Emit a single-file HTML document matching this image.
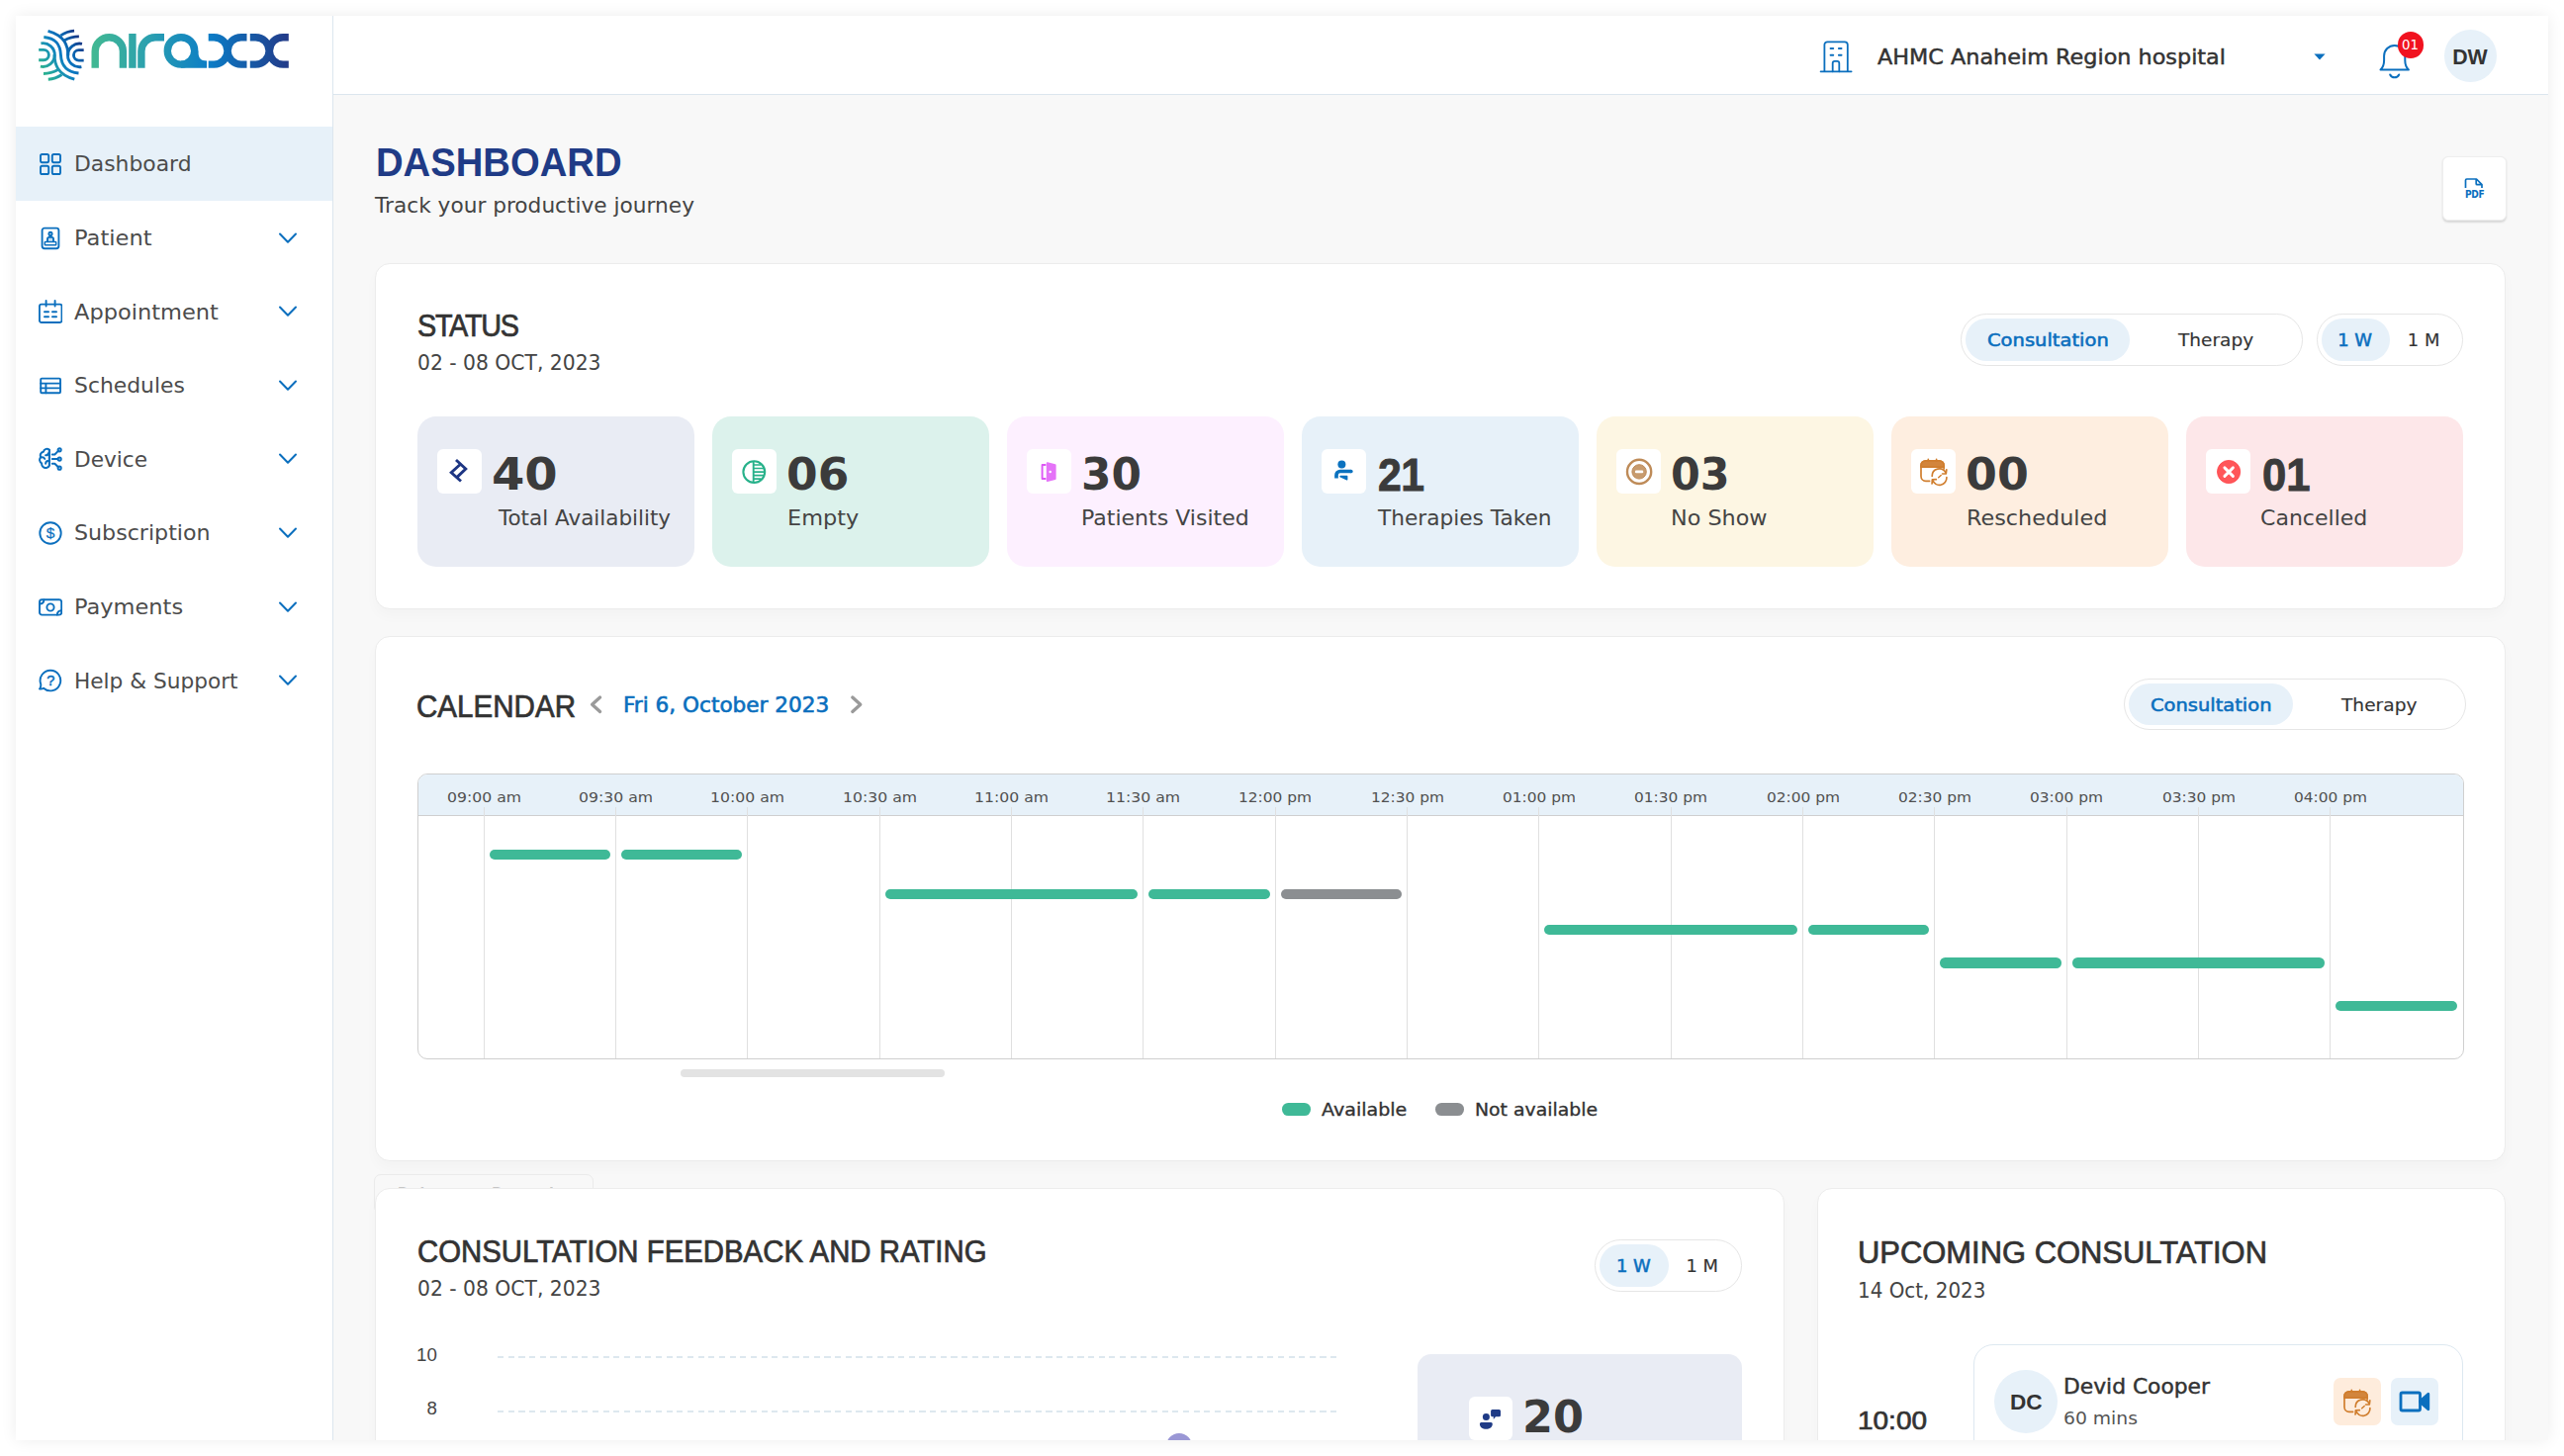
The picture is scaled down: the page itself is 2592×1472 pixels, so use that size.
<!DOCTYPE html>
<html lang="en">
<head>
<meta charset="utf-8">
<title>Niraxx Dashboard</title>
<style>
*{box-sizing:border-box;margin:0;padding:0}
html,body{width:2592px;height:1472px;background:#fff;overflow:hidden}
body{font-family:"DejaVu Sans","Liberation Sans",sans-serif;color:#444;position:relative}
.abs{position:absolute}
#frame{position:absolute;left:16px;top:16px;width:2560px;height:1440px;background:#f8f8f8;overflow:hidden}
#shadow{position:absolute;left:16px;top:16px;width:2560px;height:1440px;box-shadow:0 0 15px rgba(0,0,0,.075)}
#page{position:absolute;left:-16px;top:-16px;width:2592px;height:1472px}
.t{position:absolute;white-space:pre;line-height:1;transform-origin:0 0}
.card{position:absolute;background:#fff;border:1px solid #ececec;border-radius:15px;box-shadow:0 7px 13px rgba(0,0,0,.024)}
</style>
</head>
<body>
<div id="shadow"></div>
<div id="frame"><div id="page">

<div class="abs" style="left:16.0px;top:16.0px;width:321.0px;height:1440.0px;background:#fff;border-right:1px solid #dce6ee;"></div>
<svg class="abs" style="left:0.0px;top:0.0px;" width="330" height="100" viewBox="0 0 330 100" fill="none" role="img" aria-label="niraxx"><title>niraxx</title>
<defs>
<linearGradient id="lg" x1="92" y1="0" x2="292" y2="0" gradientUnits="userSpaceOnUse"><stop offset="0" stop-color="#42b992"/><stop offset=".3" stop-color="#2a9fb0"/><stop offset=".6" stop-color="#0b7cc6"/><stop offset="1" stop-color="#233a88"/></linearGradient>

</defs>
<g stroke="url(#lg)" stroke-width="7.4" fill="none">
<path d="M96.2 68.8V51.8a14.1 14.1 0 0 1 28.2 0V68.8"/>
<path d="M133.9 34V68.8"/>
<path d="M142.9 68.8V51.8a14.1 14.1 0 0 1 14.1-14.1h9"/>
<circle cx="183" cy="51.400" r="13.700"/><path d="M196.700 51.400c0 9 3.500 13.700 12.400 13.700H183"/>
<path d="M210.7 37.7h5.6a13.7 13.7 0 0 1 0 27.4h-5.6M249.5 37.7h-5.7a13.7 13.7 0 0 0 0 27.4h5.7"/>
<path d="M252.8 37.7h5.6a13.7 13.7 0 0 1 0 27.4h-5.6M291.8 37.7h-5.7a13.7 13.7 0 0 0 0 27.4h5.7"/>
</g></svg>
<svg class="abs" style="left:32.0px;top:24.0px;" width="64" height="66" viewBox="0 0 1412 1456" fill="none"><defs><linearGradient id="lf2" x1="150" y1="1000" x2="1170" y2="380" gradientUnits="userSpaceOnUse"><stop offset="0" stop-color="#2db68a"/><stop offset=".3" stop-color="#1c98ae"/><stop offset=".5" stop-color="#0b7ac3"/><stop offset=".75" stop-color="#0a5fab"/><stop offset="1" stop-color="#1a2a7a"/></linearGradient></defs>
<g stroke="url(#lf2)" stroke-width="64" fill="none">
<path d="M158 582H268A114 114 0 0 1 268 812H158"/>
<path d="M1162 818H1052A114 114 0 0 1 1052 588H1162"/>
<path d="M208 438A262 262 0 1 1 196 952"/>
<path d="M1112 962A262 262 0 1 1 1124 448"/>
<path d="M506 690C512 900 570 1130 955 1238"/>
<path d="M814 710C808 500 750 270 365 162"/>
<path d="M272 298C560 325 640 480 650 700S760 1075 1048 1102"/>
<path d="M648 262Q790 168 950 158"/>
<path d="M732 372Q885 285 1056 285"/>
<path d="M672 1138Q530 1232 370 1242"/>
<path d="M588 1028Q435 1115 264 1115"/>
</g></svg>
<div class="abs" style="left:16.0px;top:128.0px;width:320.0px;height:74.6px;background:#e7f1f9;"></div>
<svg class="abs" style="left:38.8px;top:153.9px;" width="24" height="24" viewBox="0 0 24 24" fill="none"><g stroke="#0b6fbe" stroke-width="1.9" fill="none" stroke-linecap="round" stroke-linejoin="round"><rect x="2" y="2" width="8.2" height="8.2" rx="1.6"/><rect x="13.8" y="2" width="8.2" height="8.2" rx="1.6"/><rect x="2" y="13.8" width="8.2" height="8.2" rx="1.6"/><rect x="13.8" y="13.8" width="8.2" height="8.2" rx="1.6"/></g></svg>
<div class="t" style="left:75.0px;top:156.2px;font-size:20.48px;color:#4c4c4c;transform:scaleX(1.0679);">Dashboard</div>
<svg class="abs" style="left:38.8px;top:228.6px;" width="24" height="24" viewBox="0 0 24 24" fill="none"><g stroke="#0b6fbe" stroke-width="1.9" fill="none" stroke-linecap="round" stroke-linejoin="round"><rect x="3.6" y="1.6" width="16.8" height="20.6" rx="2.4"/><circle cx="12" cy="7.4" r="1.6"/><path d="M9 14.8v-2.3a1.6 1.6 0 0 1 1.6-1.6h2.8a1.6 1.6 0 0 1 1.6 1.6v2.3" fill="#0b6fbe" fill-opacity=".25"/><rect x="6.3" y="15.6" width="11.4" height="3.2" rx=".6" stroke-width="1.5"/></g></svg>
<div class="t" style="left:75.0px;top:230.8px;font-size:20.48px;color:#4c4c4c;transform:scaleX(1.1027);">Patient</div>
<svg class="abs" style="left:279.0px;top:232.6px;" width="24" height="16" viewBox="0 0 24 16" fill="none"><path d="M4 3.500l8 8.300l8-8.300" stroke="#0b6fbe" stroke-width="2" fill="none" stroke-linecap="round" stroke-linejoin="round"/></svg>
<svg class="abs" style="left:38.8px;top:303.2px;" width="24" height="24" viewBox="0 0 24 24" fill="none"><g stroke="#0b6fbe" stroke-width="1.9" fill="none" stroke-linecap="round" stroke-linejoin="round"><rect x="0.900" y="4.600" width="22.600" height="18.400" rx="2"/><path d="M7.6 1v5.6M16.6 1v5.6" /><path d="M6 12.2h4M14 12.2h4M6 17.2h4M14 17.2h4" stroke-width="2"/></g></svg>
<div class="t" style="left:75.0px;top:305.5px;font-size:20.48px;color:#4c4c4c;transform:scaleX(1.0992);">Appointment</div>
<svg class="abs" style="left:279.0px;top:307.2px;" width="24" height="16" viewBox="0 0 24 16" fill="none"><path d="M4 3.500l8 8.300l8-8.300" stroke="#0b6fbe" stroke-width="2" fill="none" stroke-linecap="round" stroke-linejoin="round"/></svg>
<svg class="abs" style="left:38.8px;top:377.8px;" width="24" height="24" viewBox="0 0 24 24" fill="none"><g stroke="#0b6fbe" stroke-width="1.9" fill="none" stroke-linecap="round" stroke-linejoin="round" stroke-linejoin="miter"><rect x="2.2" y="4.6" width="19.8" height="14.6" rx="1"/><path d="M2.2 9.600h19.8M2.200 14.400h19.800M7.400 9.600v9.600"/></g></svg>
<div class="t" style="left:75.0px;top:380.1px;font-size:20.48px;color:#4c4c4c;transform:scaleX(1.0684);">Schedules</div>
<svg class="abs" style="left:279.0px;top:381.8px;" width="24" height="16" viewBox="0 0 24 16" fill="none"><path d="M4 3.500l8 8.300l8-8.300" stroke="#0b6fbe" stroke-width="2" fill="none" stroke-linecap="round" stroke-linejoin="round"/></svg>
<svg class="abs" style="left:38.8px;top:452.4px;" width="24" height="24" viewBox="0 0 24 24" fill="none"><g stroke="#0b6fbe" stroke-width="1.9" fill="none" stroke-linecap="round" stroke-linejoin="round" stroke-width="1.65" transform="translate(-1.300,-.500) scale(1.050)"><path d="M11.6 3.2c-2.4-2-5.4-.6-5.6 1.8c-2.6.4-3.8 3-2.6 5c-1.8 1.8-1.4 5 .8 6c-.2 3 2.2 5 4.6 4.4c1.2-.2 2.4-1 2.8-2.2z"/><path d="M11.6 3.2v15M8 8.4c1.4 0 2.4-.8 2.6-2M3.6 10.4c1.6-.4 3 .2 3.6 1.4M8 16.4c0-1.6 1.4-2.8 3.4-2.8"/><path d="M14.4 7.6h2.4l3.4-3.4M14.4 12h5.2M14.4 16.4h2.4l3.2 3.2"/><circle cx="21.4" cy="3.2" r="1.5"/><circle cx="21.4" cy="12" r="1.5"/><circle cx="21.4" cy="20.6" r="1.5"/></g></svg>
<div class="t" style="left:75.0px;top:454.7px;font-size:20.48px;color:#4c4c4c;transform:scaleX(1.0583);">Device</div>
<svg class="abs" style="left:279.0px;top:456.4px;" width="24" height="16" viewBox="0 0 24 16" fill="none"><path d="M4 3.500l8 8.300l8-8.300" stroke="#0b6fbe" stroke-width="2" fill="none" stroke-linecap="round" stroke-linejoin="round"/></svg>
<svg class="abs" style="left:38.8px;top:527.0px;" width="24" height="24" viewBox="0 0 24 24" fill="none"><g stroke="#0b6fbe" stroke-width="1.9" fill="none" stroke-linecap="round" stroke-linejoin="round"><circle cx="12" cy="12" r="10.700"/></g><text x="12" y="17.300" text-anchor="middle" font-family="Liberation Sans, DejaVu Sans, sans-serif" font-size="15.500" font-weight="400" fill="#0b6fbe" stroke="#0b6fbe" stroke-width=".25">$</text></svg>
<div class="t" style="left:75.0px;top:529.3px;font-size:20.48px;color:#4c4c4c;transform:scaleX(1.0819);">Subscription</div>
<svg class="abs" style="left:279.0px;top:531.0px;" width="24" height="16" viewBox="0 0 24 16" fill="none"><path d="M4 3.500l8 8.300l8-8.300" stroke="#0b6fbe" stroke-width="2" fill="none" stroke-linecap="round" stroke-linejoin="round"/></svg>
<svg class="abs" style="left:38.8px;top:601.7px;" width="24" height="24" viewBox="0 0 24 24" fill="none"><g stroke="#0b6fbe" stroke-width="1.9" fill="none" stroke-linecap="round" stroke-linejoin="round"><rect x="1" y="4.300" width="22.200" height="15.300" rx="2.400"/><circle cx="12" cy="12" r="3.6"/><path d="M1.200 8.600a4.400 4.400 0 0 0 4.200-4.200M23 15.300a4.400 4.400 0 0 0-4.200 4.200"/></g></svg>
<div class="t" style="left:75.0px;top:603.9px;font-size:20.48px;color:#4c4c4c;transform:scaleX(1.0979);">Payments</div>
<svg class="abs" style="left:279.0px;top:605.7px;" width="24" height="16" viewBox="0 0 24 16" fill="none"><path d="M4 3.500l8 8.300l8-8.300" stroke="#0b6fbe" stroke-width="2" fill="none" stroke-linecap="round" stroke-linejoin="round"/></svg>
<svg class="abs" style="left:38.8px;top:676.3px;" width="24" height="24" viewBox="0 0 24 24" fill="none"><g stroke="#0b6fbe" stroke-width="1.9" fill="none" stroke-linecap="round" stroke-linejoin="round"><path d="M5 19.700a10.300 10.300 0 1 0-2.800-4.200c.3 1.600-.2 3.600-1.200 5c1.700.2 3-.1 4-.8z"/></g><text x="12.300" y="17" text-anchor="middle" font-family="Liberation Sans, DejaVu Sans, sans-serif" font-size="14.500" font-weight="400" fill="#0b6fbe" stroke="#0b6fbe" stroke-width=".5">?</text></svg>
<div class="t" style="left:75.0px;top:678.6px;font-size:20.48px;color:#4c4c4c;transform:scaleX(1.0577);">Help &amp; Support</div>
<svg class="abs" style="left:279.0px;top:680.3px;" width="24" height="16" viewBox="0 0 24 16" fill="none"><path d="M4 3.500l8 8.300l8-8.300" stroke="#0b6fbe" stroke-width="2" fill="none" stroke-linecap="round" stroke-linejoin="round"/></svg>
<div class="abs" style="left:337.0px;top:16.0px;width:2239.0px;height:80.0px;background:#fff;border-bottom:1px solid #dce6ee;"></div>
<svg class="abs" style="left:1838.0px;top:39.0px;" width="36" height="36" viewBox="0 0 36 36" fill="none"><g stroke="#0b6fbe" stroke-width="1.800" fill="none" stroke-linecap="round" stroke-linejoin="round"><path d="M6.400 33.300V6.300a3 3 0 0 1 3-3h17.400a3 3 0 0 1 3 3V33.300M2.600 33.300h31"/><path d="M14.700 33.300v-8.400a2 2 0 0 1 2-2h2.600a2 2 0 0 1 2 2v8.400"/><path d="M12.600 9.900h2.600M20.900 9.900h2.600M12.600 16.700h2.600M20.900 16.700h2.600" stroke-width="2"/></g></svg>
<div class="t" style="left:1898.0px;top:48.3px;font-size:20.48px;color:#333;-webkit-text-stroke:0.45px #333;transform:scaleX(1.0906);">AHMC Anaheim Region hospital</div>
<svg class="abs" style="left:2337.0px;top:53.0px;" width="16" height="10" viewBox="0 0 16 10" fill="none"><path d="M2.400 1.600h11.200l-5.600 6z" fill="#0b6fbe"/></svg>
<svg class="abs" style="left:2400.0px;top:40.0px;" width="44" height="44" viewBox="0 0 44 44" fill="none"><g stroke="#0b6fbe" stroke-width="2" fill="none" stroke-linecap="round" stroke-linejoin="round"><path d="M6.500 30.500c2.600-2.400 3.600-5.400 3.600-9.500v-4.500a10.600 10.600 0 0 1 21.200 0V21c0 4.100 1 7.100 3.600 9.500z"/><path d="M16.200 35.500a5 5 0 0 0 9 0"/></g></svg>
<div class="abs" style="left:2423.5px;top:32.0px;width:26.5px;height:26.5px;background:#f1121f;border-radius:14px;"></div>
<div class="t" style="left:2428.3px;top:39.0px;font-size:13.92px;color:#fff;transform:scaleX(0.9603);">01</div>
<div class="abs" style="left:2470.6px;top:29.6px;width:53.0px;height:53.0px;background:#e7f1f9;border-radius:27px;"></div>
<div class="t" style="left:2479.2px;top:47.5px;font-size:21.33px;color:#333;font-weight:700;font-family:'Liberation Sans','DejaVu Sans',sans-serif;">DW</div>
<div class="t" style="left:380.0px;top:144.1px;font-size:40.5px;color:#1f3b86;font-weight:700;font-family:'Liberation Sans','DejaVu Sans',sans-serif;transform:scaleX(0.9440);">DASHBOARD</div>
<div class="t" style="left:379.0px;top:197.9px;font-size:20.48px;color:#444444;transform:scaleX(1.0585);">Track your productive journey</div>
<div class="abs" style="left:2468.8px;top:158.2px;width:65.0px;height:65.0px;background:#fff;border-radius:6px;border:1px solid #eeeeee;box-shadow:0 1.500px 2px rgba(0,0,0,.13);"></div>
<svg class="abs" style="left:2489.2px;top:177.8px;" width="26" height="18" viewBox="0 0 26 18" fill="none"><path d="M3.500 12V4.300a1.300 1.300 0 0 1 1.300-1.300h9.700l5.500 5.700V12M14.200 3v4.700a1 1 0 0 0 1 1H20" stroke="#0b6fbe" stroke-width="1.700" fill="none" stroke-linejoin="round"/></svg>
<div class="t" style="left:2491.9px;top:191.8px;font-size:9.79px;color:#0b6fbe;font-weight:700;letter-spacing:-0.35px;transform:scaleX(0.9300);">PDF</div>
<div class="card" style="left:379px;top:266px;width:2154.2px;height:350.2px"></div>
<div class="t" style="left:421.5px;top:313.9px;font-size:31px;color:#333;font-family:'Liberation Sans','DejaVu Sans',sans-serif;letter-spacing:-1.39px;-webkit-text-stroke:0.7px #333;transform:scaleX(0.9300);">STATUS</div>
<div class="t" style="left:421.5px;top:356.5px;font-size:20.48px;color:#444444;transform:scaleX(0.9919);">02 - 08 OCT, 2023</div>
<div class="abs" style="left:1982.0px;top:317.3px;width:346.0px;height:52.4px;background:#fff;border-radius:26.2px;border:1.5px solid #e6e6e6;"></div>
<div class="abs" style="left:1987.2px;top:322.1px;width:166.0px;height:42.6px;background:#e7f1f9;border-radius:21.299999999999997px;"></div>
<div class="t" style="left:2008.5px;top:335.0px;font-size:17.92px;color:#0b6fbe;-webkit-text-stroke:0.55px #0b6fbe;transform:scaleX(1.0890);">Consultation</div>
<div class="t" style="left:2202.3px;top:335.0px;font-size:17.92px;color:#333;-webkit-text-stroke:0.15px #333;transform:scaleX(1.0338);">Therapy</div>
<div class="abs" style="left:2341.6px;top:317.3px;width:148.8px;height:52.4px;background:#fff;border-radius:26.2px;border:1.5px solid #e6e6e6;"></div>
<div class="abs" style="left:2346.8px;top:322.1px;width:69.2px;height:42.6px;background:#e7f1f9;border-radius:21.299999999999997px;"></div>
<div class="t" style="left:2363.2px;top:335.0px;font-size:17.92px;color:#0b6fbe;-webkit-text-stroke:0.55px #0b6fbe;">1 W</div>
<div class="t" style="left:2433.8px;top:335.0px;font-size:17.92px;color:#333;-webkit-text-stroke:0.15px #333;">1 M</div>
<div class="abs" style="left:421.8px;top:421.2px;width:280.0px;height:152.0px;background:#e9ecf4;border-radius:19px;"></div>
<div class="abs" style="left:442.3px;top:454.3px;width:44.6px;height:44.6px;background:#fff;border-radius:6px;"></div>
<svg class="abs" style="left:442.3px;top:454.3px;" width="44.6" height="44.6" viewBox="0 0 44.6 44.6" fill="none"><path d="M19 11L28.800 20L20.600 27.900M24 32.500L14.200 23.800L22.700 16" stroke="#1d3583" stroke-width="2.900" fill="none" stroke-linejoin="miter"/></svg>
<div class="t" style="left:497.4px;top:457.3px;font-size:45px;color:#3b3b3b;font-weight:700;transform:scaleX(1.0651);">40</div>
<div class="t" style="left:504.3px;top:513.6px;font-size:20.48px;color:#444444;transform:scaleX(1.0495);">Total Availability</div>
<div class="abs" style="left:719.8px;top:421.2px;width:280.0px;height:152.0px;background:#dcf2ec;border-radius:19px;"></div>
<div class="abs" style="left:740.3px;top:454.3px;width:44.6px;height:44.6px;background:#fff;border-radius:6px;"></div>
<svg class="abs" style="left:740.3px;top:454.3px;" width="44.6" height="44.6" viewBox="0 0 44.6 44.6" fill="none"><g stroke="#27b18a" fill="none"><circle cx="22.300" cy="23.100" r="10.900" stroke-width="2.100"/><path d="M21.700 12.400v21.400" stroke-width="1.900"/><path d="M22 16h7.600M22 19.500h10M22 23.100h10.800M22 26.700h10M22 30.200h7.600" stroke-width="1.700"/></g></svg>
<div class="t" style="left:795.4px;top:457.3px;font-size:45px;color:#3b3b3b;font-weight:700;transform:scaleX(1.0108);">06</div>
<div class="t" style="left:795.5px;top:513.6px;font-size:20.48px;color:#444444;transform:scaleX(1.0937);">Empty</div>
<div class="abs" style="left:1017.8px;top:421.2px;width:280.0px;height:152.0px;background:#fdf0ff;border-radius:19px;"></div>
<div class="abs" style="left:1038.3px;top:454.3px;width:44.6px;height:44.6px;background:#fff;border-radius:6px;"></div>
<svg class="abs" style="left:1038.3px;top:454.3px;" width="44.6" height="44.6" viewBox="0 0 44.6 44.6" fill="none"><g><path d="M18.700 16h-3.100v14h3.100" stroke="#dd58f5" stroke-width="1.900" fill="none" stroke-linejoin="round" stroke-linecap="round"/><path d="M19.800 14.300a1 1 0 0 1 1.200-1l7.800 2a1 1 0 0 1 .800 1v13.600a1 1 0 0 1-.800 1l-7.800 2a1 1 0 0 1-1.200-1z" fill="#e573f8"/><circle cx="23.700" cy="23" r="1.250" fill="#fff"/></g></svg>
<div class="t" style="left:1093.4px;top:457.3px;font-size:45px;color:#3b3b3b;font-weight:700;transform:scaleX(0.9725);">30</div>
<div class="t" style="left:1093.0px;top:513.6px;font-size:20.48px;color:#444444;transform:scaleX(1.0764);">Patients Visited</div>
<div class="abs" style="left:1315.8px;top:421.2px;width:280.0px;height:152.0px;background:#e7f1f9;border-radius:19px;"></div>
<div class="abs" style="left:1336.3px;top:454.3px;width:44.6px;height:44.6px;background:#fff;border-radius:6px;"></div>
<svg class="abs" style="left:1336.3px;top:454.3px;" width="44.6" height="44.6" viewBox="0 0 44.6 44.6" fill="none"><g fill="#0b72bf"><circle cx="20.400" cy="15.600" r="4"/><path d="M15 29.600v-3.300a3.800 3.800 0 0 1 3.800-3.800h11" stroke="#0b72bf" stroke-width="3.700" fill="none" stroke-linecap="butt"/><circle cx="29.800" cy="22.500" r="1.850"/><path d="M19.200 26.700h6.500a.700.700 0 0 1 .700.700v3.400a.700.700 0 0 1-1 .600l-6.500-2.800a1 1 0 0 1 .300-1.900z"/></g></svg>
<div class="t" style="left:1392.6px;top:456.5px;font-size:46px;color:#3b3b3b;font-weight:700;font-family:'Liberation Sans','DejaVu Sans',sans-serif;letter-spacing:-0.63px;-webkit-text-stroke:0.9px #3b3b3b;transform:scaleX(0.9300);">21</div>
<div class="t" style="left:1392.8px;top:513.6px;font-size:20.48px;color:#444444;transform:scaleX(1.0583);">Therapies Taken</div>
<div class="abs" style="left:1613.8px;top:421.2px;width:280.0px;height:152.0px;background:#fdf6e3;border-radius:19px;"></div>
<div class="abs" style="left:1634.3px;top:454.3px;width:44.6px;height:44.6px;background:#fff;border-radius:6px;"></div>
<svg class="abs" style="left:1634.3px;top:454.3px;" width="44.6" height="44.6" viewBox="0 0 44.6 44.6" fill="none"><g><circle cx="23.100" cy="22.900" r="12.100" stroke="#be8b58" stroke-width="2.400" fill="none"/><circle cx="23.100" cy="22.900" r="7.200" fill="#c79b6e" stroke="#be8b58" stroke-width="1"/><path d="M20.200 22.900h5.800" stroke="#fff" stroke-width="2.600" stroke-linecap="round"/></g></svg>
<div class="t" style="left:1689.4px;top:457.3px;font-size:45px;color:#3b3b3b;font-weight:700;transform:scaleX(0.9517);">03</div>
<div class="t" style="left:1688.8px;top:513.6px;font-size:20.48px;color:#444444;transform:scaleX(1.0884);">No Show</div>
<div class="abs" style="left:1911.8px;top:421.2px;width:280.0px;height:152.0px;background:#feeee0;border-radius:19px;"></div>
<div class="abs" style="left:1932.3px;top:454.3px;width:44.6px;height:44.6px;background:#fff;border-radius:6px;"></div>
<svg class="abs" style="left:1932.3px;top:454.3px;" width="44.6" height="44.6" viewBox="0 0 44.6 44.6" fill="none"><g stroke="#d07e2e" fill="none" stroke-width="1.700" stroke-linecap="round" stroke-linejoin="round"><path d="M18.600 32.300h-3.800a4.800 4.800 0 0 1-4.800-4.800V16.600a4.800 4.800 0 0 1 4.800-4.800h13.500a4.800 4.800 0 0 1 4.800 4.800v3.400"/><path d="M10 18.200v-1.600a4.800 4.800 0 0 1 4.800-4.800h13.500a4.800 4.800 0 0 1 4.800 4.800v1.600z" fill="#d2853c"/><path d="M17.300 10.400v1.700M25.600 10.400v1.700"/><path d="M21.200 27.300a7.300 7.300 0 0 1 13.800-3.400M35.900 28.600a7.300 7.300 0 0 1-14.200 2.800"/><path d="M35.800 20.800l-.500 4.100l-3.700.100M21.100 35l.300-4.100l3.900-.200"/><path d="M27.700 28.800l2.500-2.300" stroke-width="1.500"/></g></svg>
<div class="t" style="left:1987.4px;top:457.3px;font-size:45px;color:#3b3b3b;font-weight:700;transform:scaleX(1.0188);">00</div>
<div class="t" style="left:1988.2px;top:513.6px;font-size:20.48px;color:#444444;transform:scaleX(1.0901);">Rescheduled</div>
<div class="abs" style="left:2209.8px;top:421.2px;width:280.0px;height:152.0px;background:#fde7e9;border-radius:19px;"></div>
<div class="abs" style="left:2230.3px;top:454.3px;width:44.6px;height:44.6px;background:#fff;border-radius:6px;"></div>
<svg class="abs" style="left:2230.3px;top:454.3px;" width="44.6" height="44.6" viewBox="0 0 44.6 44.6" fill="none"><g><circle cx="23.100" cy="23" r="11.600" fill="#ff5659" stroke="#ff4449" stroke-width=".800"/><path d="M18.900 18.900l8.500 8.500M27.400 18.900l-8.500 8.500" stroke="#fff" stroke-width="2.900" stroke-linecap="round"/></g></svg>
<div class="t" style="left:2286.6px;top:456.5px;font-size:46px;color:#3b3b3b;font-weight:700;font-family:'Liberation Sans','DejaVu Sans',sans-serif;-webkit-text-stroke:0.9px #3b3b3b;transform:scaleX(0.9497);">01</div>
<div class="t" style="left:2285.0px;top:513.6px;font-size:20.48px;color:#444444;transform:scaleX(1.0763);">Cancelled</div>
<div class="card" style="left:379px;top:643px;width:2154.2px;height:531px"></div>
<div class="t" style="left:421.0px;top:698.7px;font-size:31px;color:#333;font-family:'Liberation Sans','DejaVu Sans',sans-serif;-webkit-text-stroke:0.7px #333;transform:scaleX(0.9536);">CALENDAR</div>
<svg class="abs" style="left:594.0px;top:700.0px;" width="18" height="24" viewBox="0 0 18 24" fill="none"><path d="M12.600 5l-8 7.200l8 7.200" stroke="#9a9a9a" stroke-width="3.300" fill="none" stroke-linecap="round" stroke-linejoin="round"/></svg>
<div class="t" style="left:630.4px;top:703.1px;font-size:20.48px;color:#0b6fbe;-webkit-text-stroke:0.6px #0b6fbe;transform:scaleX(1.0549);">Fri 6, October 2023</div>
<svg class="abs" style="left:856.0px;top:700.0px;" width="18" height="24" viewBox="0 0 18 24" fill="none"><path d="M5.800 5l8 7.200l-8 7.200" stroke="#9a9a9a" stroke-width="3.300" fill="none" stroke-linecap="round" stroke-linejoin="round"/></svg>
<div class="abs" style="left:2147.0px;top:685.8px;width:346.0px;height:52.4px;background:#fff;border-radius:26.2px;border:1.5px solid #e6e6e6;"></div>
<div class="abs" style="left:2152.0px;top:690.6px;width:166.4px;height:42.6px;background:#e7f1f9;border-radius:21.299999999999997px;"></div>
<div class="t" style="left:2173.8px;top:703.5px;font-size:17.92px;color:#0b6fbe;-webkit-text-stroke:0.55px #0b6fbe;transform:scaleX(1.0863);">Consultation</div>
<div class="t" style="left:2367.4px;top:703.5px;font-size:17.92px;color:#333;-webkit-text-stroke:0.15px #333;transform:scaleX(1.0393);">Therapy</div>
<div class="abs" style="left:421.500px;top:781.500px;width:2069px;height:289.500px;background:#fff;border:1.500px solid #cfcfcf;border-radius:10px;overflow:hidden"><div class="abs" style="left:0;top:0;width:2069px;height:42.500px;background:#e7f1f9;border-bottom:1.500px solid #cfcfcf"></div><div class="abs" style="left:66.0px;top:33px;width:1px;height:260px;background:#e0e0e0"></div><div class="abs" style="left:199.0px;top:33px;width:1px;height:260px;background:#e0e0e0"></div><div class="abs" style="left:332.0px;top:33px;width:1px;height:260px;background:#e0e0e0"></div><div class="abs" style="left:466.0px;top:33px;width:1px;height:260px;background:#e0e0e0"></div><div class="abs" style="left:599.0px;top:33px;width:1px;height:260px;background:#e0e0e0"></div><div class="abs" style="left:732.0px;top:33px;width:1px;height:260px;background:#e0e0e0"></div><div class="abs" style="left:866.0px;top:33px;width:1px;height:260px;background:#e0e0e0"></div><div class="abs" style="left:999.0px;top:33px;width:1px;height:260px;background:#e0e0e0"></div><div class="abs" style="left:1132.0px;top:33px;width:1px;height:260px;background:#e0e0e0"></div><div class="abs" style="left:1266.0px;top:33px;width:1px;height:260px;background:#e0e0e0"></div><div class="abs" style="left:1399.0px;top:33px;width:1px;height:260px;background:#e0e0e0"></div><div class="abs" style="left:1532.0px;top:33px;width:1px;height:260px;background:#e0e0e0"></div><div class="abs" style="left:1666.0px;top:33px;width:1px;height:260px;background:#e0e0e0"></div><div class="abs" style="left:1799.0px;top:33px;width:1px;height:260px;background:#e0e0e0"></div><div class="abs" style="left:1932.0px;top:33px;width:1px;height:260px;background:#e0e0e0"></div></div>
<div class="t" style="left:451.7px;top:798.5px;font-size:14.3px;color:#505050;transform:scaleX(1.0959);">09:00 am</div>
<div class="t" style="left:585.0px;top:798.5px;font-size:14.3px;color:#505050;transform:scaleX(1.0959);">09:30 am</div>
<div class="t" style="left:718.4px;top:798.5px;font-size:14.3px;color:#505050;transform:scaleX(1.0959);">10:00 am</div>
<div class="t" style="left:851.7px;top:798.5px;font-size:14.3px;color:#505050;transform:scaleX(1.0959);">10:30 am</div>
<div class="t" style="left:985.0px;top:798.5px;font-size:14.3px;color:#505050;transform:scaleX(1.0959);">11:00 am</div>
<div class="t" style="left:1118.4px;top:798.5px;font-size:14.3px;color:#505050;transform:scaleX(1.0959);">11:30 am</div>
<div class="t" style="left:1252.2px;top:798.5px;font-size:14.3px;color:#505050;transform:scaleX(1.0764);">12:00 pm</div>
<div class="t" style="left:1385.5px;top:798.5px;font-size:14.3px;color:#505050;transform:scaleX(1.0764);">12:30 pm</div>
<div class="t" style="left:1518.9px;top:798.5px;font-size:14.3px;color:#505050;transform:scaleX(1.0764);">01:00 pm</div>
<div class="t" style="left:1652.2px;top:798.5px;font-size:14.3px;color:#505050;transform:scaleX(1.0764);">01:30 pm</div>
<div class="t" style="left:1785.5px;top:798.5px;font-size:14.3px;color:#505050;transform:scaleX(1.0764);">02:00 pm</div>
<div class="t" style="left:1918.9px;top:798.5px;font-size:14.3px;color:#505050;transform:scaleX(1.0764);">02:30 pm</div>
<div class="t" style="left:2052.2px;top:798.5px;font-size:14.3px;color:#505050;transform:scaleX(1.0764);">03:00 pm</div>
<div class="t" style="left:2185.5px;top:798.5px;font-size:14.3px;color:#505050;transform:scaleX(1.0764);">03:30 pm</div>
<div class="t" style="left:2318.9px;top:798.5px;font-size:14.3px;color:#505050;transform:scaleX(1.0764);">04:00 pm</div>
<div class="abs" style="left:494.6px;top:858.7px;width:122.5px;height:10.6px;background:#3fb997;border-radius:5.3px;"></div>
<div class="abs" style="left:627.9px;top:858.7px;width:122.5px;height:10.6px;background:#3fb997;border-radius:5.3px;"></div>
<div class="abs" style="left:894.6px;top:898.7px;width:255.9px;height:10.6px;background:#3fb997;border-radius:5.3px;"></div>
<div class="abs" style="left:1161.3px;top:898.7px;width:122.5px;height:10.6px;background:#3fb997;border-radius:5.3px;"></div>
<div class="abs" style="left:1294.6px;top:898.7px;width:122.5px;height:10.6px;background:#8b8e91;border-radius:5.3px;"></div>
<div class="abs" style="left:1561.3px;top:934.5px;width:255.9px;height:10.6px;background:#3fb997;border-radius:5.3px;"></div>
<div class="abs" style="left:1827.9px;top:934.5px;width:122.5px;height:10.6px;background:#3fb997;border-radius:5.3px;"></div>
<div class="abs" style="left:1961.3px;top:968.1px;width:122.5px;height:10.6px;background:#3fb997;border-radius:5.3px;"></div>
<div class="abs" style="left:2094.6px;top:968.1px;width:255.9px;height:10.6px;background:#3fb997;border-radius:5.3px;"></div>
<div class="abs" style="left:2361.3px;top:1011.9px;width:122.5px;height:10.6px;background:#3fb997;border-radius:5.3px;"></div>
<div class="abs" style="left:688.0px;top:1081.2px;width:266.5px;height:7.8px;background:#e3e3e3;border-radius:4px;"></div>
<div class="abs" style="left:1296.0px;top:1115.2px;width:29.4px;height:12.6px;background:#3fb997;border-radius:6.3px;"></div>
<div class="t" style="left:1336.4px;top:1113.1px;font-size:17.92px;color:#333;-webkit-text-stroke:0.35px #333;transform:scaleX(1.0646);">Available</div>
<div class="abs" style="left:1451.0px;top:1115.2px;width:29.0px;height:12.6px;background:#8b8e91;border-radius:6.3px;"></div>
<div class="t" style="left:1491.3px;top:1113.1px;font-size:17.92px;color:#333;-webkit-text-stroke:0.35px #333;transform:scaleX(1.0518);">Not available</div>
<div class="abs" style="left:377.7px;top:1187.3px;width:222.0px;height:40.0px;background:#f8f8f8;border-radius:7px;border:1px solid #ebebeb;"></div>
<div class="t" style="left:400.5px;top:1200.4px;font-size:20.48px;color:#333;-webkit-text-stroke:0.4px #333;transform:scaleX(1.1114);">Primary Practice</div>
<div class="card" style="left:379px;top:1201px;width:1424.700px;height:320px"></div>
<div class="t" style="left:421.5px;top:1250.3px;font-size:31px;color:#333;font-family:'Liberation Sans','DejaVu Sans',sans-serif;-webkit-text-stroke:0.7px #333;transform:scaleX(0.9474);">CONSULTATION FEEDBACK AND RATING</div>
<div class="t" style="left:421.5px;top:1292.9px;font-size:20.48px;color:#444444;transform:scaleX(0.9919);">02 - 08 OCT, 2023</div>
<div class="abs" style="left:1612.2px;top:1253.2px;width:148.8px;height:52.4px;background:#fff;border-radius:26.2px;border:1.5px solid #e6e6e6;"></div>
<div class="abs" style="left:1617.4px;top:1258.0px;width:69.2px;height:42.6px;background:#e7f1f9;border-radius:21.299999999999997px;"></div>
<div class="t" style="left:1634.0px;top:1270.9px;font-size:17.92px;color:#0b6fbe;-webkit-text-stroke:0.55px #0b6fbe;">1 W</div>
<div class="t" style="left:1704.4px;top:1270.9px;font-size:17.92px;color:#333;-webkit-text-stroke:0.15px #333;">1 M</div>
<div class="t" style="left:421.0px;top:1360.7px;font-size:18.67px;color:#444444;font-family:'Liberation Sans','DejaVu Sans',sans-serif;">10</div>
<div class="t" style="left:431.4px;top:1415.2px;font-size:18.67px;color:#444444;font-family:'Liberation Sans','DejaVu Sans',sans-serif;">8</div>
<div class="abs" style="left:502.700px;top:1371.2px;width:848px;height:1.900px;background:repeating-linear-gradient(90deg,#dde8ef 0 6.200px,transparent 6.200px 10.660px)"></div>
<div class="abs" style="left:502.700px;top:1425.9px;width:848px;height:1.900px;background:repeating-linear-gradient(90deg,#dde8ef 0 6.200px,transparent 6.200px 10.660px)"></div>
<div class="abs" style="left:1179.2px;top:1449.2px;width:26.0px;height:26.0px;background:#9a97d5;border-radius:13px;"></div>
<div class="abs" style="left:1433.2px;top:1369.4px;width:328.2px;height:120.0px;background:#e9ecf4;border-radius:14px;"></div>
<div class="abs" style="left:1485.1px;top:1412.0px;width:44.4px;height:44.4px;background:#fff;border-radius:6px;"></div>
<svg class="abs" style="left:1485.1px;top:1412.0px;" width="44.4" height="44.4" viewBox="0 0 44.4 44.4" fill="none"><g fill="#1f3b86"><circle cx="17.400" cy="20.500" r="3.500"/><path d="M10.900 27.500a1.500 1.500 0 0 1 1.500-1.500h9.900a1.500 1.500 0 0 1 1.500 1.500c0 3.500-2.900 5.300-6.450 5.300s-6.450-1.800-6.450-5.300z"/><path d="M23.600 12.900h6.900a1.500 1.500 0 0 1 1.500 1.500v4.300a1.500 1.500 0 0 1-1.500 1.500h-3.500l-2.200 2.900v-2.900h-1.200a1.500 1.500 0 0 1-1.500-1.500v-4.300a1.500 1.500 0 0 1 1.500-1.500z"/></g></svg>
<div class="t" style="left:1538.8px;top:1409.6px;font-size:45px;color:#3b3b3b;font-weight:700;transform:scaleX(0.9900);">20</div>
<div class="card" style="left:1836.700px;top:1201px;width:696.500px;height:320px"></div>
<div class="t" style="left:1877.6px;top:1250.6px;font-size:31px;color:#333;font-family:'Liberation Sans','DejaVu Sans',sans-serif;-webkit-text-stroke:0.7px #333;transform:scaleX(0.9974);">UPCOMING CONSULTATION</div>
<div class="t" style="left:1877.6px;top:1294.9px;font-size:20.48px;color:#444444;transform:scaleX(0.9726);">14 Oct, 2023</div>
<div class="t" style="left:1878.3px;top:1423.2px;font-size:26.67px;color:#333;font-family:'Liberation Sans','DejaVu Sans',sans-serif;-webkit-text-stroke:0.7px #333;transform:scaleX(1.0492);">10:00</div>
<div class="abs" style="left:1995.3px;top:1359.4px;width:495.2px;height:140.0px;background:#fff;border-radius:20px;border:1.600px solid #dde8f0;"></div>
<div class="abs" style="left:2015.7px;top:1385.0px;width:64.0px;height:64.0px;background:#e7f1f9;border-radius:32px;"></div>
<div class="t" style="left:2031.9px;top:1407.3px;font-size:22.6px;color:#333;font-weight:700;font-family:'Liberation Sans','DejaVu Sans',sans-serif;">DC</div>
<div class="t" style="left:2086.4px;top:1392.4px;font-size:20.48px;color:#333;-webkit-text-stroke:0.45px #333;transform:scaleX(1.0647);">Devid Cooper</div>
<div class="t" style="left:2086.4px;top:1424.8px;font-size:17.92px;color:#555;transform:scaleX(1.0478);">60 mins</div>
<div class="abs" style="left:2358.6px;top:1393.4px;width:48.0px;height:47.6px;background:#feecdc;border-radius:7px;"></div>
<svg class="abs" style="left:2360.3px;top:1394.9px;" width="44.6" height="44.6" viewBox="0 0 44.6 44.6" fill="none"><g stroke="#d07e2e" fill="none" stroke-width="1.700" stroke-linecap="round" stroke-linejoin="round"><path d="M18.600 32.300h-3.800a4.800 4.800 0 0 1-4.800-4.800V16.600a4.800 4.800 0 0 1 4.800-4.800h13.500a4.800 4.800 0 0 1 4.800 4.800v3.400"/><path d="M10 18.200v-1.600a4.800 4.800 0 0 1 4.800-4.800h13.500a4.800 4.800 0 0 1 4.800 4.800v1.600z" fill="#d2853c"/><path d="M17.300 10.400v1.700M25.600 10.400v1.700"/><path d="M21.200 27.300a7.300 7.300 0 0 1 13.800-3.400M35.900 28.600a7.300 7.300 0 0 1-14.200 2.800"/><path d="M35.800 20.800l-.500 4.100l-3.700.100M21.100 35l.300-4.100l3.900-.200"/><path d="M27.700 28.800l2.500-2.300" stroke-width="1.500"/></g></svg>
<div class="abs" style="left:2417.2px;top:1393.4px;width:48.0px;height:47.6px;background:#e7f1f9;border-radius:7px;"></div>
<svg class="abs" style="left:2417.2px;top:1393.4px;" width="48" height="48" viewBox="0 0 48 48" fill="none"><g stroke="#0b6fbe" stroke-width="2.800" fill="none" stroke-linejoin="round"><rect x="10" y="15" width="19.500" height="18" rx="1.500"/><path d="M29.500 23.500l8.300-7.300v15.600l-8.300-7.300z" fill="#0b6fbe"/></g></svg>
</div></div>
</body>
</html>
